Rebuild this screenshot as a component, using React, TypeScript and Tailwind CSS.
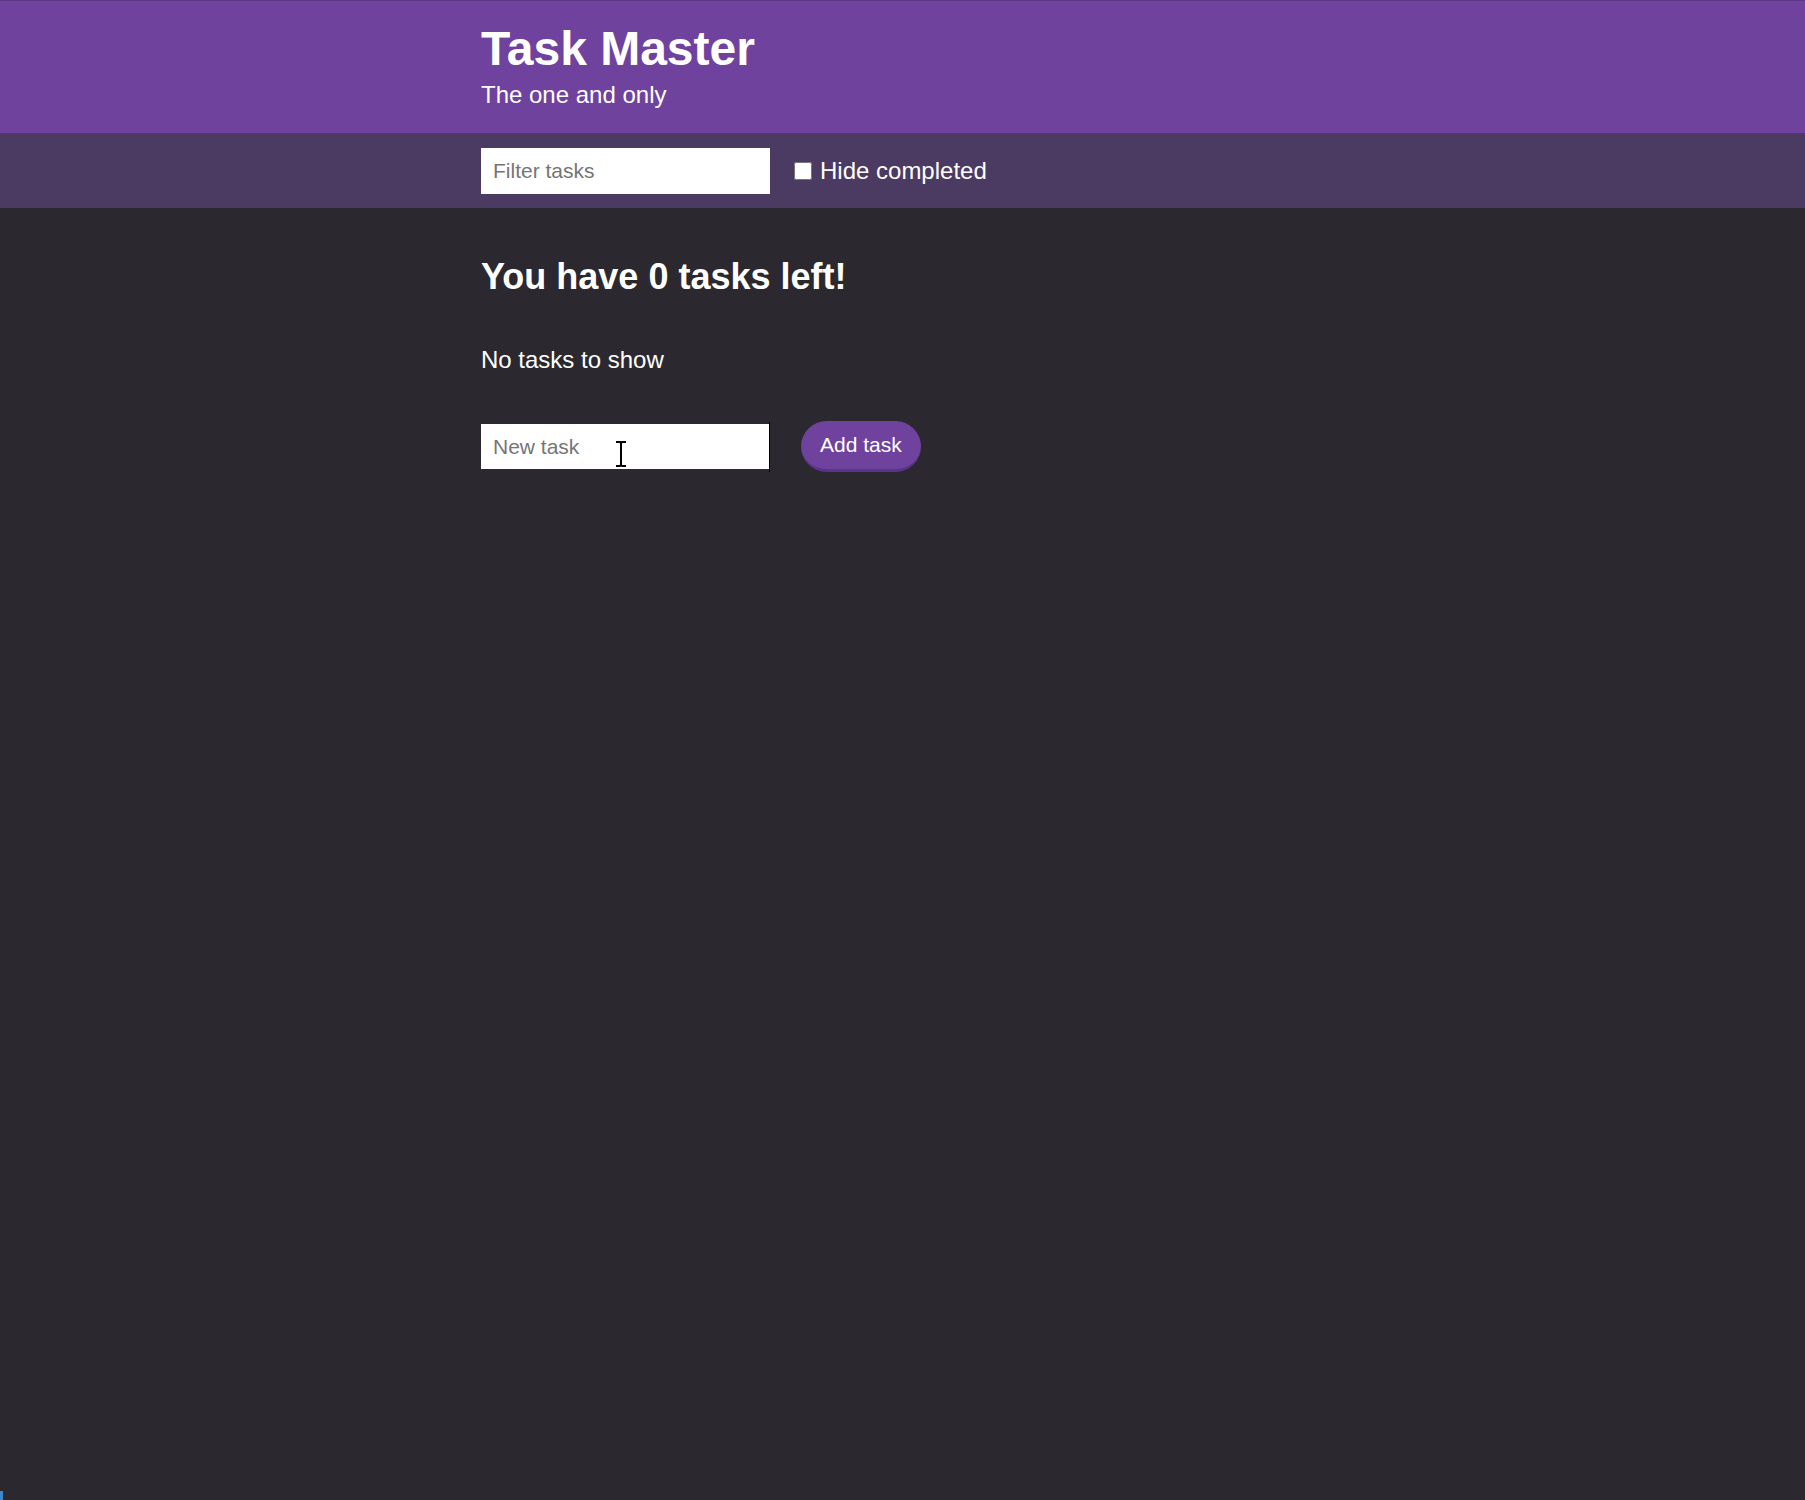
import React, { useState } from "react";

export default function App() {
  const [tasks, setTasks] = useState<{ id: number; text: string; done: boolean }[]>([]);
  const [filter, setFilter] = useState("");
  const [hideCompleted, setHideCompleted] = useState(false);
  const [draft, setDraft] = useState("");

  const left = tasks.filter((t) => !t.done).length;
  const shown = tasks.filter(
    (t) => (!hideCompleted || !t.done) && t.text.toLowerCase().includes(filter.toLowerCase())
  );

  const addTask = () => {
    if (!draft.trim()) return;
    setTasks([...tasks, { id: Date.now(), text: draft.trim(), done: false }]);
    setDraft("");
  };

  return (
    <div className="relative min-h-[1500px] bg-[#2b292f] text-white font-['Liberation_Sans',Arial,sans-serif]">
      {/* Header */}
      <header className="border-t border-[#5c3786] bg-[#6f429e] pt-[20px] pb-[24px]">
        <div className="mx-auto max-w-[843px]">
          <h1 className="text-[48px] font-bold leading-[55px]">Task Master</h1>
          <p className="mt-[5px] text-[24px] leading-[28px]">The one and only</p>
        </div>
      </header>

      {/* Filter bar */}
      <div className="bg-[#4b3a61] pt-[15px] pb-[14px]">
        <div className="mx-auto flex max-w-[843px] items-center">
          <input
            value={filter}
            onChange={(e) => setFilter(e.target.value)}
            placeholder="Filter tasks"
            className="h-[46px] w-[289px] bg-white px-[12px] text-[21px] text-black outline-none placeholder:text-[#757575]"
          />
          <label className="ml-[24px] flex items-center gap-[8px] text-[24px]">
            <input
              type="checkbox"
              checked={hideCompleted}
              onChange={(e) => setHideCompleted(e.target.checked)}
              className="h-[18px] w-[18px]"
            />
            Hide completed
          </label>
        </div>
      </div>

      {/* Main */}
      <main className="mx-auto flex max-w-[843px] flex-col pt-[48px]">
        <h2 className="text-[36px] font-bold leading-[41px]">You have {left} tasks left!</h2>

        {shown.length === 0 ? (
          <p className="mt-[49px] text-[24px] leading-[28px]">No tasks to show</p>
        ) : (
          <ul className="mt-[49px] flex flex-col gap-2 text-[24px]">
            {shown.map((t) => (
              <li key={t.id}>{t.text}</li>
            ))}
          </ul>
        )}

        <div className="mt-[47px] flex items-center gap-[31px]">
          <div className="relative flex h-[50px] items-center border-r border-black">
            <input
              value={draft}
              onChange={(e) => setDraft(e.target.value)}
              placeholder="New task"
              className="h-[45px] w-[288px] bg-white px-[12px] text-[21px] text-black outline-none placeholder:text-[#757575]"
            />
            {/* mouse I-beam cursor captured in screenshot */}
            <svg
              className="pointer-events-none absolute left-[133px] top-[19px]"
              width="14"
              height="26"
              viewBox="0 0 14 26"
            >
              <path d="M2 1h4l1 1 1-1h4M7 2v22M2 25h4l1-1 1 1h4" stroke="#000" strokeWidth="2" fill="none" />
            </svg>
          </div>
          <button
            onClick={addTask}
            className="h-[51px] rounded-full border-b-[3px] border-[#5a3489] bg-[#6f429e] px-[19px] text-[21px] text-white"
          >
            Add task
          </button>
        </div>
      </main>

      <div className="absolute bottom-0 left-0 h-[9px] w-[3px] bg-[#3b88cc]" />
    </div>
  );
}
